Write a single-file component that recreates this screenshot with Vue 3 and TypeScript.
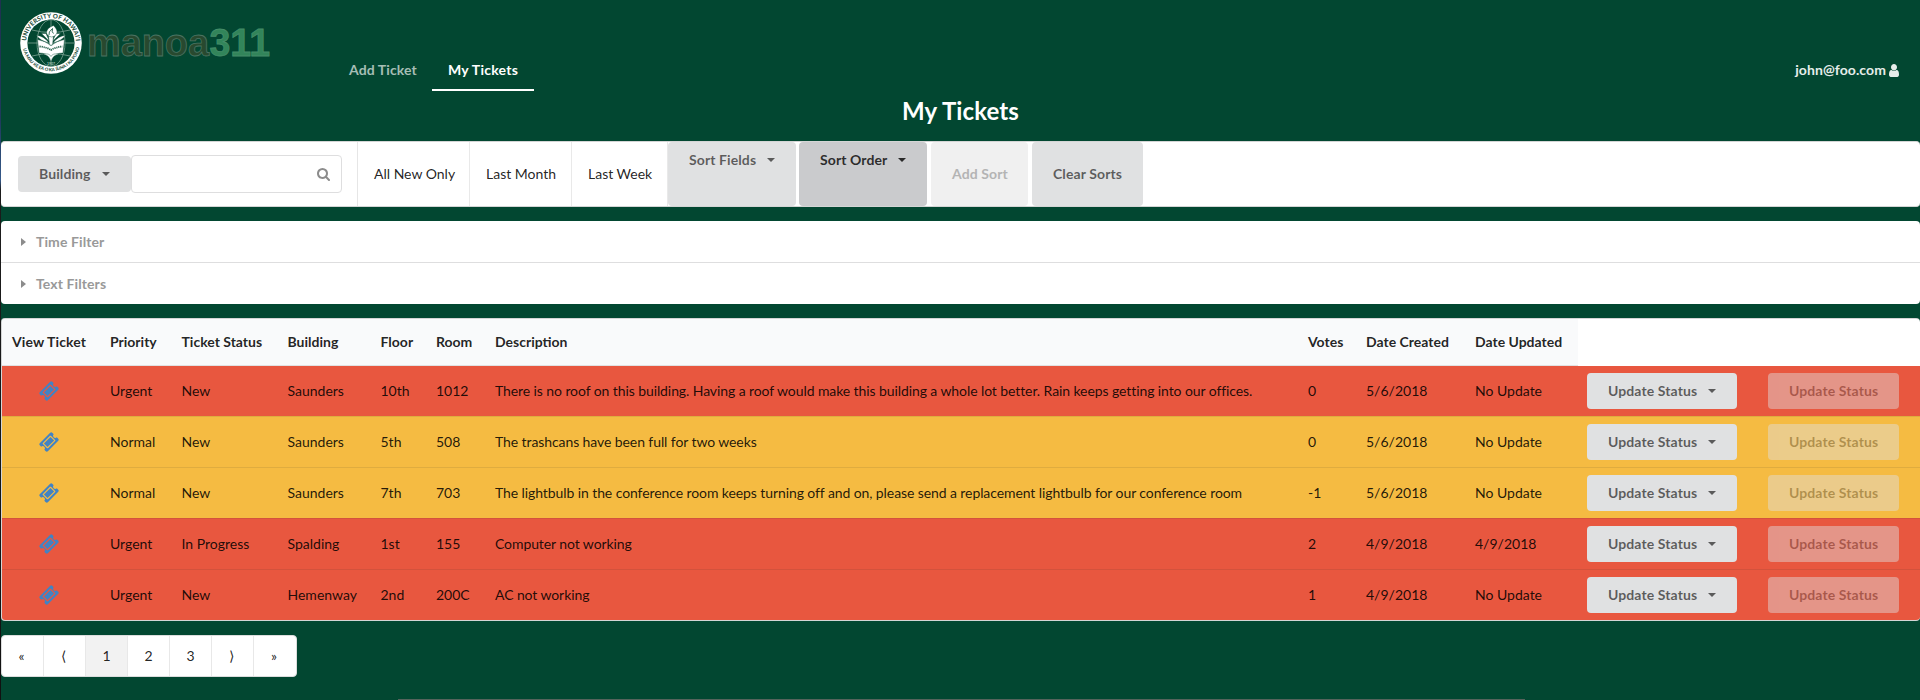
<script setup lang="ts">
interface Ticket {
  priority: 'Urgent' | 'Normal'
  status: string
  building: string
  floor: string
  room: string
  description: string
  votes: number
  created: string
  updated: string
}

const columns: string[] = [
  'View Ticket', 'Priority', 'Ticket Status', 'Building', 'Floor', 'Room',
  'Description', 'Votes', 'Date Created', 'Date Updated',
]

const tickets: Ticket[] = [
  { priority: 'Urgent', status: 'New', building: 'Saunders', floor: '10th', room: '1012', description: 'There is no roof on this building. Having a roof would make this building a whole lot better. Rain keeps getting into our offices.', votes: 0, created: '5/6/2018', updated: 'No Update' },
  { priority: 'Normal', status: 'New', building: 'Saunders', floor: '5th', room: '508', description: 'The trashcans have been full for two weeks', votes: 0, created: '5/6/2018', updated: 'No Update' },
  { priority: 'Normal', status: 'New', building: 'Saunders', floor: '7th', room: '703', description: 'The lightbulb in the conference room keeps turning off and on, please send a replacement lightbulb for our conference room', votes: -1, created: '5/6/2018', updated: 'No Update' },
  { priority: 'Urgent', status: 'In Progress', building: 'Spalding', floor: '1st', room: '155', description: 'Computer not working', votes: 2, created: '4/9/2018', updated: '4/9/2018' },
  { priority: 'Urgent', status: 'New', building: 'Hemenway', floor: '2nd', room: '200C', description: 'AC not working', votes: 1, created: '4/9/2018', updated: 'No Update' },
]

const quickFilters: string[] = ['All New Only', 'Last Month', 'Last Week']
const pages: string[] = ['«', '⟨', '1', '2', '3', '⟩', '»']
</script>

<template>
  <div class="page">
    <div class="edge"></div>
    <header class="header">
      <svg class="logo" width="270" height="80" viewBox="0 0 270 80">
        <defs>
          <path id="arc-top" d="M25 43 a25 25 0 0 1 50 0" />
          <path id="arc-bottom" d="M21.6 46 a28.6 28.6 0 0 0 56.8 0" />
        </defs>
        <circle cx="50" cy="43" r="30.8" fill="#fff" />
        <circle cx="50" cy="43" r="23.6" fill="#024731" />
        <g fill="none" stroke="#7fa595" stroke-width="0.8">
          <ellipse cx="50" cy="43" rx="14" ry="23.4" />
          <path d="M50 19.5v47M26.5 43h47M31 30q19 5 38 0M31 56q19-5 38 0" />
        </g>
        <g fill="#fff" stroke="#024731" stroke-width="0.4">
          <path d="M36.5 39.5q8 1.500 13.500 6 5.500-4.500 13.500-6l-1.500 13.500q-8 0-12 5-4-5-12-5z" />
          <path d="M35.500 35.500q7 0 12.500 7.500-9-2.500-12.500-7.500zM64.500 35.500q-7 0-12.500 7.500 9-2.500 12.500-7.500zM40.500 33.500l8 8-3.500-8zM59.500 33.500l-8 8 3.500-8z" />
          <path d="M47.500 36h5l-1 9h-3z" />
          <path d="M52.500 25.500q5 5 3 8.500-2 3-5 3-5-1-5-5 1-4.500 7-6.500z" />
          <path d="M42 54.500q6 0 8 7 2-7 8-7-6-2-8 2-2-4-8-2z" />
        </g>
        <path d="M48 35q-1-3 3.500-6.500-1 4 1 5" fill="none" stroke="#024731" stroke-width="0.8" />
        <path d="M38.500 46.500q7 .5 11.500 3.500 4.500-3 11.500-3.500" fill="none" stroke="#24604a" stroke-width="1.800" stroke-dasharray="1.200 .8" />
        <g class="seal-text">
          <text font-size="6.2"><textPath href="#arc-top" startOffset="2" textLength="74">UNIVERSITY OF HAWAI‘I</textPath></text>
          <text font-size="4.4"><textPath href="#arc-bottom" startOffset="3" textLength="78">UA MAU KE EA O KA ‘ĀINA I KA PONO</textPath></text>
          <text class="year" x="46" y="64.500" font-size="3.500">1907</text>
        </g>
        <g class="wordmark">
          <text x="86" y="56" textLength="122" lengthAdjust="spacingAndGlyphs" fill="#28492f" stroke="#4a7362">manoa</text>
          <text x="208.500" y="56" textLength="60.500" lengthAdjust="spacingAndGlyphs" fill="#32855a" stroke="#458d69">311</text>
        </g>
      </svg>
      <nav class="nav">
        <a class="nav-item">Add Ticket</a>
        <a class="nav-item active">My Tickets</a>
      </nav>
      <div class="user">
        <span>john@foo.com</span>
        <svg width="10" height="13" viewBox="256 128 1280 1536" preserveAspectRatio="none"><path fill="#e6edea" d="M1536 1399q0 109-62.5 187t-150.5 78h-854q-88 0-150.5-78t-62.5-187q0-85 8.5-160.5t31.5-152 58.5-131 94-89 134.5-34.5q131 128 313 128t313-128q76 0 134.5 34.5t94 89 58.5 131 31.5 152 8.5 160.5zm-256-887q0 159-112.5 271.5t-271.5 112.5-271.5-112.5-112.5-271.5 112.5-271.5 271.5-112.5 271.5 112.5 112.5 271.5z" /></svg>
      </div>
    </header>

    <h1 class="title">My Tickets</h1>

    <section class="toolbar">
      <div class="search">
        <button class="btn building">Building<i class="caret"></i></button>
        <div class="search-box">
          <svg width="13" height="13" viewBox="64 128 1664 1664"><path fill="#8c8c8c" d="M1216 832q0-185-131.5-316.5t-316.5-131.5-316.5 131.5-131.5 316.5 131.5 316.5 316.5 131.5 316.5-131.5 131.5-316.5zm512 832q0 52-38 90t-90 38q-54 0-90-38l-343-342q-179 124-399 124-143 0-273.5-55.5t-225-150-150-225-55.5-273.5 55.5-273.5 150-225 225-150 273.5-55.5 273.5 55.5 225 150 150 225 55.5 273.5q0 220-124 399l343 343q37 37 37 90z" /></svg>
        </div>
      </div>
      <a v-for="filter in quickFilters" :key="filter" class="quick">{{ filter }}</a>
      <button class="btn tall sort">Sort Fields<i class="caret"></i></button>
      <button class="btn tall sort dark">Sort Order<i class="caret"></i></button>
      <button class="btn tall add">Add Sort</button>
      <button class="btn tall clear">Clear Sorts</button>
    </section>

    <section class="accordion">
      <div class="fold"><i class="arrow"></i>Time Filter</div>
      <div class="fold"><i class="arrow"></i>Text Filters</div>
    </section>

    <section class="table">
      <div class="row head">
        <div v-for="column in columns" :key="column" class="cell">{{ column }}</div>
      </div>
      <div v-for="(t, i) in tickets" :key="i" class="row" :class="t.priority.toLowerCase()">
        <div class="cell icon">
          <svg width="20" height="20" viewBox="25 25 1742 1742"><path fill="#4183c4" d="M1024 452l316 316-572 572-316-316zm-211 979l618-618q19-19 19-45t-19-45l-362-362q-18-18-45-18t-45 18l-618 618q-19 19-19 45t19 45l362 362q18 18 45 18t45-18zm889-637l-907 908q-37 37-90.5 37t-90.5-37l-126-126q56-56 56-136t-56-136-136-56-136 56l-125-126q-37-37-37-90.5t37-90.5l907-906q37-37 90.5-37t90.5 37l125 125q-56 56-56 136t56 136 136 56 136-56l126 125q37 37 37 90.5t-37 90.5z" /></svg>
        </div>
        <div class="cell">{{ t.priority }}</div>
        <div class="cell">{{ t.status }}</div>
        <div class="cell">{{ t.building }}</div>
        <div class="cell">{{ t.floor }}</div>
        <div class="cell">{{ t.room }}</div>
        <div class="cell description">{{ t.description }}</div>
        <div class="cell">{{ t.votes }}</div>
        <div class="cell">{{ t.created }}</div>
        <div class="cell">{{ t.updated }}</div>
        <div class="actions">
          <button class="btn update">Update Status<i class="caret"></i></button>
          <button class="btn submit">Update Status</button>
        </div>
      </div>
    </section>

    <nav class="pagination">
      <a v-for="page in pages" :key="page" :class="{ current: page === '1', angle: '⟨⟩«»'.includes(page) }">{{ page }}</a>
    </nav>
    <div class="bottom-edge"></div>
  </div>
</template>

<style>
body { margin: 0; background: #024731; }
</style>

<style scoped>
.page {
  position: relative;
  box-sizing: border-box;
  width: 1920px;
  height: 700px;
  padding-left: 1px;
  overflow: hidden;
  background: #024731;
  font: 14px/18px Lato, "Noto Sans", sans-serif;
  color: rgba(0, 0, 0, .87);
}
.page * { box-sizing: border-box; }
.edge {
  position: absolute;
  left: 0;
  top: 0;
  width: 1px;
  height: 700px;
  background: linear-gradient(#1f3150, #1f3a5c 120px, #36598a 180px, #1c1c1c 190px, #111 700px);
}
.bottom-edge {
  position: absolute;
  left: 398px;
  bottom: 0;
  width: 1127px;
  height: 1px;
  background: #56635c;
}
.header { display: flex; height: 91px; }
.logo { flex: none; height: 80px; }
.seal-text { font-family: Lato, sans-serif; font-weight: 900; fill: #24503e; }
.year { fill: #9dbbae; }
.wordmark { font: bold 38px "Liberation Sans", sans-serif; stroke-width: .8; }
.nav { display: flex; margin-left: 62px; font-weight: 700; white-space: nowrap; }
.nav-item {
  height: 91px;
  padding: 61px 16px 0;
  color: #a6beb5;
  border-bottom: 2px solid transparent;
  letter-spacing: .1px;
}
.nav-item:first-child { width: 99px; padding-right: 0; }
.nav-item.active { width: 102px; padding-right: 0; color: #fff; border-color: #fff; letter-spacing: .25px; }
.user {
  display: flex;
  gap: 3px;
  margin: 61px 21px 0 auto;
  color: #e6edea;
  font-weight: 700;
  letter-spacing: .08px;
}
.user svg { margin-top: 3px; }
.title {
  height: 50px;
  margin: 0;
  padding: 4px 0 0 0;
  font-size: 24px;
  line-height: 31px;
  letter-spacing: .1px;
  text-align: center;
  color: #fff;
}
.toolbar {
  display: flex;
  height: 66px;
  border: 1px solid #d4d5d5;
  border-width: 1px 0 1px;
  border-radius: 4px;
  background: #fff;
}
.search { display: flex; align-items: center; width: 357px; padding-left: 17px; border-right: 1px solid #e6e6e6; }
.btn {
  border: 0;
  border-radius: 4px;
  padding: 0;
  background: #e0e1e2;
  color: rgba(0, 0, 0, .6);
  font: 700 14px/14px Lato, sans-serif;
  letter-spacing: .1px;
  white-space: nowrap;
  display: flex;
  align-items: center;
  flex: none;
}
.caret {
  margin-left: 11px;
  border: 4px solid transparent;
  border-width: 4px 4px 0;
  border-top-color: currentColor;
}
.building { width: 113px; height: 36px; padding-left: 21px; }
.search-box {
  display: flex;
  justify-content: flex-end;
  align-items: center;
  width: 211px;
  height: 38px;
  padding-right: 11px;
  border: 1px solid #dededf;
  border-radius: 4px;
}
.quick { display: flex; align-items: center; padding-left: 16px; border-right: 1px solid #e9e9e9; }
.quick:nth-child(2) { width: 112px; }
.quick:nth-child(3) { width: 102px; }
.quick:nth-child(4) { width: 96px; }
.tall { height: 64px; padding-left: 21px; }
.sort { width: 128px; margin-right: 3px; padding-bottom: 29px; }
.dark { background: #cacbcd; color: rgba(0, 0, 0, .8); margin-right: 4px; }
.add { width: 97px; margin-right: 4px; background: #f0f0f0; color: #b4b4b4; }
.clear { width: 111px; }
.accordion { margin-top: 14px; height: 83px; border-radius: 4px; background: #fff; }
.fold {
  display: flex;
  align-items: center;
  height: 41px;
  padding-left: 20px;
  color: #999;
  font-weight: 700;
  letter-spacing: .1px;
}
.fold + .fold { height: 42px; border-top: 1px solid #dededf; }
.arrow {
  margin-right: 10px;
  border: 4px solid transparent;
  border-width: 4px 0 4px 5px;
  border-left-color: #8c8c8c;
}
.table {
  margin-top: 14px;
  border: 1px solid #d4d5d5;
  border-right: 0;
  border-radius: 4px;
  overflow: hidden;
  background: #fff;
  height: 303px;
}
.row {
  display: grid;
  grid-template-columns: 97px 71.5px 106px 93px 55.5px 59px 813px 58px 109px 114px 1fr;
  height: 51px;
  border-top: 1px solid rgba(34, 36, 38, .1);
}
.head { height: 47px; border: 0; font-weight: 700; }
.head .cell { background: #f9fafb; border-bottom: 1px solid #e1e2e3; }
.head + .row { height: 50px; border-top: 0; }
.urgent { background: #e8573f; }
.normal { background: #f5bb42; }
.cell { display: flex; align-items: center; padding-left: 11px; white-space: nowrap; }
.head .cell:first-child { padding-left: 10px; letter-spacing: .1px; }
.icon { padding-left: 37px; }
.description { letter-spacing: -.09px; }
.actions { display: flex; align-items: center; padding-left: 9px; }
.update { width: 150px; height: 36px; padding-left: 21px; margin-right: 31px; }
.submit { width: 131px; height: 36px; padding-left: 21px; opacity: .45; }
.pagination {
  display: flex;
  width: 296px;
  height: 42px;
  margin-top: 14px;
  border: 1px solid #dcdddd;
  border-radius: 4px;
  overflow: hidden;
  background: #fff;
}
.pagination a {
  width: 42px;
  flex: none;
  display: flex;
  align-items: center;
  justify-content: center;
  border-right: 1px solid #e8e8e8;
}
.pagination a:last-child { border: 0; }
.pagination .angle { padding-right: 2px; }
.pagination .current { background: #f2f2f2; }
</style>
